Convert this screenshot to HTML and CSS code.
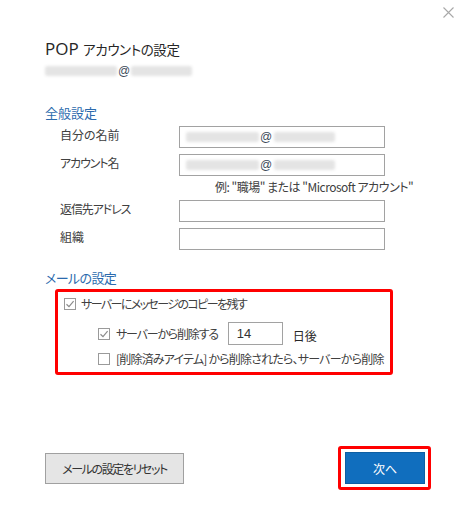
FILE: index.html
```html
<!DOCTYPE html>
<html lang="ja">
<head>
<meta charset="utf-8">
<title>POP アカウントの設定</title>
<link rel="stylesheet" href="styles.css">
</head>
<body>
<div class="dialog">
  <div class="topbar">
    <svg class="close" width="11" height="11" viewBox="0 0 11 11"><path d="M0.5 0.5 L10.5 10.5 M10.5 0.5 L0.5 10.5" stroke="#a8a8a8" stroke-width="1.1" fill="none"/></svg>
  </div>
  <h1 class="title">POP <span class="title-ja">アカウントの設定</span></h1>
  <div class="email"><span class="blur b-user"></span><span class="at">@</span><span class="blur b-domain"></span></div>

  <h2 class="section first">全般設定</h2>
  <div class="form">
    <div class="row">
      <span class="label">自分の名前</span>
      <div class="input"><span class="blur b-in-user"></span><span class="at">@</span><span class="blur b-in-domain"></span></div>
    </div>
    <div class="row">
      <span class="label kana">アカウント名</span>
      <div class="input"><span class="blur b-in-user"></span><span class="at">@</span><span class="blur b-in-domain"></span></div>
    </div>
    <div class="hint">例: "職場" または "Microsoft アカウント"</div>
    <div class="row gap-after-hint">
      <span class="label kana">返信先アドレス</span>
      <div class="input"></div>
    </div>
    <div class="row">
      <span class="label">組織</span>
      <div class="input"></div>
    </div>
  </div>

  <h2 class="section second">メールの設定</h2>
  <div class="highlight">
    <div class="check-row r1">
      <span class="cb checked"><svg width="10" height="10" viewBox="0 0 10 10"><path d="M1.5 5.2 L4 7.6 L8.6 2.2" stroke="#8c8c8c" stroke-width="1.2" fill="none"/></svg></span>
      <span class="cb-text t1">サーバーにメッセージのコピーを残す</span>
    </div>
    <div class="check-row r2 sub">
      <span class="cb checked"><svg width="10" height="10" viewBox="0 0 10 10"><path d="M1.5 5.2 L4 7.6 L8.6 2.2" stroke="#8c8c8c" stroke-width="1.2" fill="none"/></svg></span>
      <span class="cb-text t2">サーバーから削除する</span>
      <div class="days">14</div>
      <span class="unit">日後</span>
    </div>
    <div class="check-row r3 sub">
      <span class="cb"></span>
      <span class="cb-text t3">[削除済みアイテム] から削除されたら、サーバーから削除</span>
    </div>
  </div>

  <div class="footer">
    <button class="btn-reset">メールの設定をリセット</button>
    <div class="next-frame"><button class="btn-next">次へ</button></div>
  </div>
</div>
</body>
</html>
```

FILE: styles.css
```css
html, body {
  margin: 0;
  padding: 0;
  background: #ffffff;
}

body {
  font-family: "Noto Sans CJK JP", "Noto Sans", sans-serif;
  font-feature-settings: "palt" 1;
  color: #333333;
  width: 470px;
  height: 529px;
  overflow: hidden;
}

.dialog {
  padding-left: 45px;
}

.topbar {
  height: 37px;
  display: flex;
  justify-content: flex-end;
  align-items: flex-start;
  padding-right: 16px;
  box-sizing: border-box;
  padding-top: 7px;
}

.title {
  margin: 0;
  font-family: "Open Sans", "Noto Sans", sans-serif;
  font-size: 17px;
  font-weight: normal;
  line-height: 24px;
  color: #262626;
  display: flex;
  align-items: baseline;
  white-space: pre;
}

.title-ja {
  font-family: "Noto Sans CJK JP", sans-serif;
  font-size: 13.5px;
  letter-spacing: -0.4px;
}

.email {
  margin-top: 3px;
  height: 14px;
  display: flex;
  align-items: center;
  font-size: 12px;
  line-height: 14px;
}

.blur {
  display: inline-block;
  height: 10px;
  background: #e4e4e4;
  filter: blur(1.8px);
  border-radius: 2px;
}

.b-user { width: 72px; margin-right: 1px; }
.b-domain { width: 61px; margin-left: 1px; }
.b-in-user { width: 73px; margin-right: 1px; }
.b-in-domain { width: 61px; margin-left: 2px; }

.at {
  color: #3c4a5a;
  font-family: "Liberation Sans", sans-serif;
  font-size: 12px;
}

.section {
  margin: 0;
  font-size: 13px;
  font-weight: normal;
  line-height: 16px;
  color: #2b6aad;
}

.section.second { letter-spacing: -0.6px; }
.section.first { margin-top: 27px; }
.section.second { margin-top: 20px; }

.form {
  margin-top: 5px;
  display: flex;
  flex-direction: column;
  gap: 6px;
}

.row {
  display: flex;
  align-items: center;
  height: 22px;
}

.label {
  width: 134px;
  padding-left: 15px;
  box-sizing: border-box;
  font-size: 12px;
  line-height: 16px;
  margin-top: -4px;
  color: #404040;
  white-space: nowrap;
}

.label.kana { letter-spacing: -1.1px; }

.input {
  width: 206px;
  height: 22px;
  box-sizing: border-box;
  border: 1px solid #a2a2a2;
  background: #fff;
  display: flex;
  align-items: center;
  padding-left: 6px;
}

.hint {
  margin-top: -3px;
  padding-left: 170px;
  font-size: 12px;
  line-height: 16px;
  color: #404040;
  white-space: nowrap;
  letter-spacing: -0.5px;
}

.gap-after-hint { margin-top: -1px; }

.highlight {
  margin-top: 3px;
  margin-left: 10px;
  width: 338px;
  height: 86px;
  box-sizing: border-box;
  border: 3px solid #ff0000;
  border-radius: 3px;
  padding: 2px 0 0 6px;
  display: flex;
  flex-direction: column;
}

.check-row {
  display: flex;
  align-items: center;
  font-size: 12px;
  line-height: 19px;
  color: #404040;
}

.check-row.sub { padding-left: 34px; }
.check-row.r1 { height: 19px; }
.check-row.r2 { height: 23px; margin-top: 9px; }
.check-row.r3 { height: 19px; margin-top: 4px; }

.cb {
  width: 12px;
  height: 12px;
  box-sizing: border-box;
  border: 1px solid #9a9a9a;
  background: #fff;
  display: flex;
  align-items: center;
  justify-content: center;
  flex: none;
}

.cb-text { margin-left: 5px; white-space: nowrap; }
.sub .cb-text { margin-left: 6px; }
.t1 { letter-spacing: -1.6px; }
.t2 { letter-spacing: -1.2px; }
.t3 { letter-spacing: -0.8px; }

.days {
  margin-left: 10px;
  width: 55px;
  height: 23px;
  box-sizing: border-box;
  border: 1px solid #a2a2a2;
  padding-left: 8px;
  display: flex;
  align-items: center;
  font-family: "Liberation Sans", sans-serif;
  font-size: 13px;
  color: #333;
}

.unit {
  margin-left: 10px;
  margin-top: 4px;
  font-size: 12px;
  color: #262626;
}

.footer {
  margin-top: 71px;
  padding-right: 39px;
  display: flex;
  justify-content: space-between;
  align-items: center;
}

button {
  font-family: "Noto Sans CJK JP", "Noto Sans", sans-serif;
  font-feature-settings: "palt" 1;
  font-size: 12px;
  margin: 0;
  cursor: pointer;
}

.btn-reset {
  width: 139px;
  height: 31px;
  background: #e5e5e5;
  border: 1px solid #a0a0a0;
  color: #333333;
  padding: 0;
  letter-spacing: -1.4px;
}

.next-frame {
  border: 3px solid #ff0000;
  border-radius: 3px;
  padding: 3px 3px 3px 4px;
  display: flex;
}

.btn-next {
  width: 80px;
  height: 32px;
  background: #106ebe;
  border: 1px solid #0d5ea3;
  color: #ffffff;
  padding: 0;
}
```
